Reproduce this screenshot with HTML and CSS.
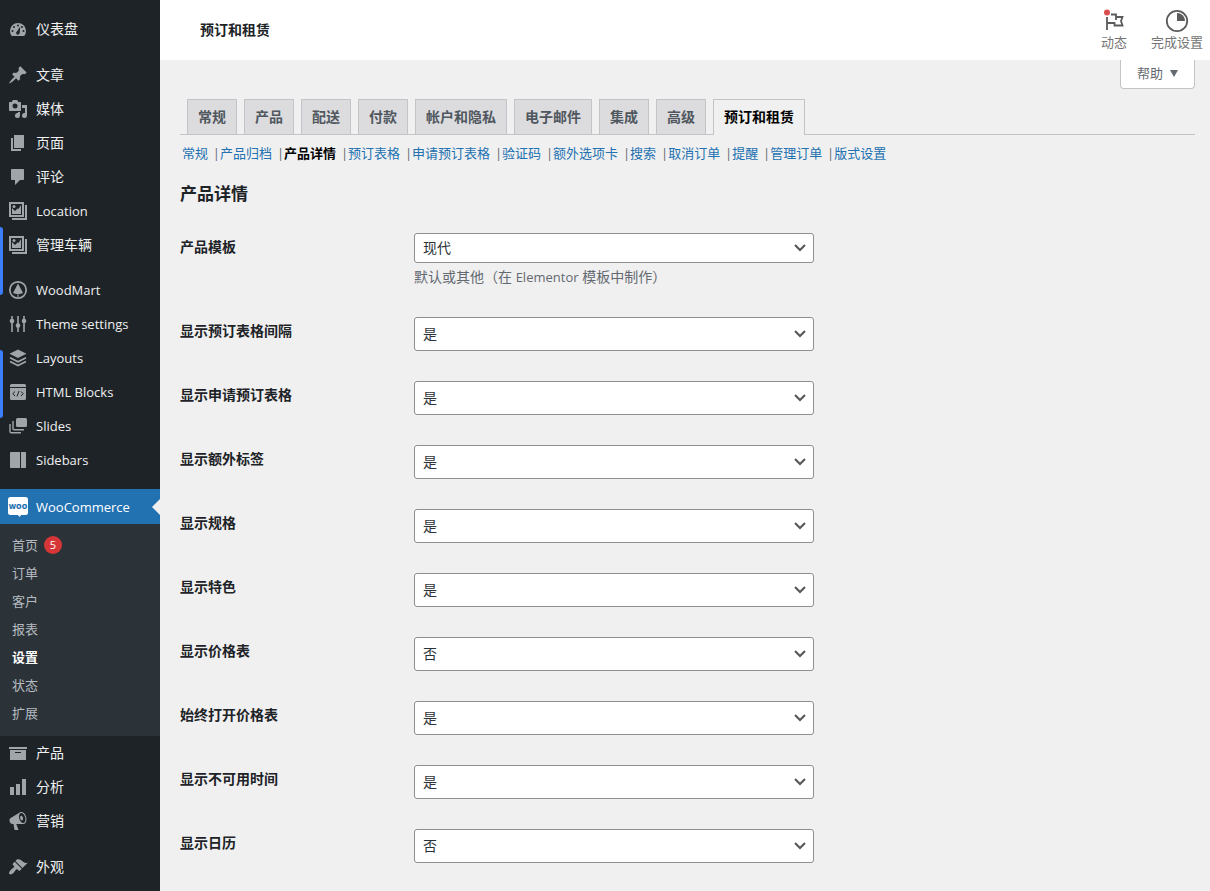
FILE: index.html
```html
<!DOCTYPE html>
<html lang="zh-CN">
<head>
<meta charset="utf-8">
<meta name="viewport" content="width=device-width, initial-scale=1">
<title>预订和租赁</title>
<link rel="stylesheet" href="styles.css">
</head>
<body>
<div class="app">
  <nav class="sidebar" aria-label="主菜单">
    <ul class="menu">
      <li><a class="menu-link" href="#"><svg class="icon" viewBox="0 0 20 20"><path d="M3.8 17h12.4A8 8 0 1 0 3.800 17z"/><g class="hole"><circle cx="10" cy="6.500" r="1"/><circle cx="6" cy="8" r="1"/><circle cx="14" cy="8" r="1"/><circle cx="4.500" cy="12" r="1"/><circle cx="15.500" cy="12" r="1"/><path d="M12.300 7.500l-.6 6a1.800 1.800 0 1 1-2.600-1.300z"/></g></svg>仪表盘</a></li>
      <li class="spaced"><a class="menu-link" href="#"><svg class="icon" viewBox="0 0 20 20"><path d="M10.440 3.020l1.820-1.820 6.360 6.350-1.830 1.820c-1.050-.68-2.480-.57-3.410.36l-.75.75c-.92.93-1.040 2.350-.35 3.410l-1.830 1.820-2.410-2.410-2.800 2.790c-.42.42-3.380 2.710-3.800 2.290s1.860-3.390 2.280-3.810l2.790-2.790L4.100 9.360l1.830-1.820c1.050.69 2.480.57 3.400-.36l.75-.75c.93-.92 1.050-2.350.36-3.410z"/></svg>文章</a></li>
      <li><a class="menu-link" href="#"><svg class="icon" viewBox="0 0 20 20"><path fill-rule="evenodd" d="M13 11V4c0-.55-.45-1-1-1h-1.670L9 1H5L3.670 3H2c-.55 0-1 .45-1 1v7c0 .55.45 1 1 1h10c.55 0 1-.45 1-1zM7 4.500a2.500 2.500 0 1 1 0 5 2.500 2.500 0 0 1 0-5z"/><path d="M14 6h5v10.500a2.500 2.500 0 1 1-2-2.450V9h-3zM10 14.050V13h2v3.500a2.500 2.500 0 1 1-2-2.450z"/></svg>媒体</a></li>
      <li><a class="menu-link" href="#"><svg class="icon" viewBox="0 0 20 20"><path d="M6 15V2h10v13H6zm-1 1h8v2H3V5h2v11z"/></svg>页面</a></li>
      <li><a class="menu-link" href="#"><svg class="icon" viewBox="0 0 20 20"><path d="M4 2h11c.6 0 1 .4 1 1v9c0 .6-.4 1-1 1h-3l-5 5v-5H4c-.6 0-1-.4-1-1V3c0-.6.4-1 1-1z"/></svg>评论</a></li>
      <li><a class="menu-link latin" href="#"><svg class="icon" viewBox="0 0 20 20"><path fill-rule="evenodd" d="M1 1h15v15H1zM3 3v11h11V3z"/><path d="M17 4h2v15H4v-2h13z"/><path d="M4 7l3 3 2.500-2.500 1 .5L13 4v9H4z"/><circle cx="6" cy="5.500" r="1.500"/></svg>Location</a></li>
      <li class="flagged"><a class="menu-link" href="#"><svg class="icon" viewBox="0 0 20 20"><path fill-rule="evenodd" d="M1 1h15v15H1zM3 3v11h11V3z"/><path d="M17 4h2v15H4v-2h13z"/><path d="M4 7l3 3 2.500-2.500 1 .5L13 4v9H4z"/><circle cx="6" cy="5.500" r="1.500"/></svg>管理车辆</a></li>
      <li class="spaced tight"><a class="menu-link latin" href="#"><svg class="icon" viewBox="0 0 20 20"><circle class="line" cx="10" cy="10" r="8.200"/><path d="M10 3.500l5 9.500c-1.300.7-2.800 1-4.500 1.100V17h-1v-2.900C7.800 14 6.300 13.700 5 13z"/></svg>WoodMart</a></li>
      <li><a class="menu-link latin" href="#"><svg class="icon" viewBox="0 0 20 20"><path d="M3.200 2h1.600v16H3.200zM9.200 2h1.600v16H9.200zM15.200 2h1.600v16h-1.600z"/><circle cx="4" cy="7" r="2.300"/><circle cx="10" cy="11.500" r="2.300"/><circle cx="16" cy="7" r="2.300"/></svg>Theme settings</a></li>
      <li><a class="menu-link latin" href="#"><svg class="icon" viewBox="0 0 20 20"><path d="M10 1.500l8.500 4.200L10 10 1.500 5.700z"/><path class="line" d="M2 9.700l8 4 8-4M2 13.500l8 4 8-4"/></svg>Layouts</a></li>
      <li class="flagged low"><a class="menu-link latin" href="#"><svg class="icon" viewBox="0 0 20 20"><path d="M3.500 2h13A1.500 1.500 0 0 1 18 3.500V5H2V3.500A1.500 1.500 0 0 1 3.500 2zM2 6h16v10.500a1.500 1.500 0 0 1-1.500 1.500h-13A1.500 1.500 0 0 1 2 16.500z"/><path class="cut" d="M7 9.500L4.800 11.700 7 14M13 9.500l2.200 2.200L13 14M11 9l-2 5.500"/></svg>HTML Blocks</a></li>
      <li><a class="menu-link latin" href="#"><svg class="icon" viewBox="0 0 20 20"><rect x="8" y="2" width="11" height="9" rx="1.500"/><path class="line thin" d="M5 5v7.500c0 .8.5 1.300 1.300 1.300H16M2 8v7.500c0 .8.500 1.300 1.300 1.300H13"/></svg>Slides</a></li>
      <li><a class="menu-link latin" href="#"><svg class="icon" viewBox="0 0 20 20"><path d="M3 2h9v16H3c-.6 0-1-.4-1-1V3c0-.6.4-1 1-1zM13 2h4c.6 0 1 .4 1 1v14c0 .6-.4 1-1 1h-4z"/></svg>Sidebars</a></li>
      <li class="spaced">
        <a class="menu-link latin current" href="#"><svg class="icon woo" viewBox="0 0 20 20"><path d="M2.500 0h15A2.500 2.500 0 0 1 20 2.500v13a2.500 2.500 0 0 1-2.500 2.500H13l-1.200 2-2-2H2.500A2.500 2.500 0 0 1 0 15.500v-13A2.500 2.500 0 0 1 2.500 0z"/><text class="woo-text" x="10" y="12" text-anchor="middle">WOO</text></svg>WooCommerce</a>
        <ul class="submenu">
          <li><a href="#">首页 <span class="count">5</span></a></li>
          <li><a href="#">订单</a></li>
          <li><a href="#">客户</a></li>
          <li><a href="#">报表</a></li>
          <li><a class="active" href="#">设置</a></li>
          <li><a href="#">状态</a></li>
          <li><a href="#">扩展</a></li>
        </ul>
      </li>
      <li><a class="menu-link" href="#"><svg class="icon" viewBox="0 0 20 20"><path d="M19 4v2H1V4h18zM2 7h16v10H2V7zm11 3V9H7v1h6z"/></svg>产品</a></li>
      <li><a class="menu-link" href="#"><svg class="icon" viewBox="0 0 20 20"><path d="M18 18V2h-4v16h4zm-6 0V7H8v11h4zm-6 0v-8H2v8h4z"/></svg>分析</a></li>
      <li><a class="menu-link" href="#"><svg class="icon" viewBox="0 0 20 20"><path d="M18.150 5.940c.46 1.620.38 3.220-.02 4.480-.42 1.280-1.260 2.180-2.300 2.480-.16.060-.26.060-.4.060-.06.020-.12.020-.18.020-.06.020-.14.020-.22.020h-6.800l2.220 5.500c.02.140-.06.260-.14.340-.08.100-.24.160-.34.160H6.950c-.1 0-.26-.06-.34-.16-.08-.08-.16-.2-.14-.34l-1-5.500H4.250l-.02-.02c-.5.060-1.080-.18-1.540-.62s-.88-1.080-1.060-1.880c-.24-.8-.2-1.560-.02-2.200.18-.62.58-1.080 1.060-1.300l.02-.02 9-5.400c.1-.06.18-.1.24-.16.060-.04.140-.08.24-.12.160-.08.280-.12.5-.18 1.040-.3 2.240.1 3.220.98s1.840 2.240 2.260 3.860zm-2.580 5.980h-.02c.4-.1.740-.34 1.040-.7.580-.7.860-1.760.86-3.040 0-.64-.1-1.300-.28-1.980-.34-1.360-1.020-2.500-1.780-3.240s-1.680-1.100-2.460-.88c-.82.220-1.400.96-1.700 2-.32 1.040-.28 2.360.06 3.720.38 1.360 1 2.500 1.800 3.240.78.740 1.620 1.100 2.480.88zm-2.540-7.080c.22-.04.42-.02.62.04.38.160.76.480 1.020 1s.42 1.200.42 1.780c0 .3-.04.56-.12.8-.18.48-.44.84-.86.940-.34.100-.8-.06-1.140-.4s-.64-.86-.78-1.500c-.18-.62-.12-1.240.02-1.720s.48-.84.82-.94z"/></svg>营销</a></li>
      <li class="spaced"><a class="menu-link" href="#"><svg class="icon" viewBox="0 0 20 20"><path d="M14.480 11.060L7.410 3.990l1.500-1.500c.5-.56 2.300-.47 3.510.32 1.210.8 1.430 1.280 2.910 2.100 1.180.64 2.450 1.260 4.450.85zm-.71.71L6.700 4.700 4.930 6.470c-.39.39-.39 1.020 0 1.410l1.060 1.060c.39.39.39 1.030 0 1.420-.6.6-1.430 1.110-2.210 1.690-.35.26-.7.53-1.010.84C1.430 14.230.4 16.080 1.400 17.070c.99 1 2.840-.03 4.180-1.360.31-.31.58-.66.85-1.020.57-.78 1.080-1.610 1.690-2.210.39-.39 1.020-.39 1.410 0l1.060 1.060c.39.39 1.020.39 1.410 0z"/></svg>外观</a></li>
    </ul>
  </nav>

  <div class="main">
    <header class="topbar">
      <h1 class="page-title">预订和租赁</h1>
      <div class="actions">
        <button class="action" type="button">
          <svg class="action-icon" viewBox="0 0 24 24"><path class="stroke" d="M5 8v13M9 5.500h5v2.500h6.500l-1.500 4 1.500 4.500h-8v-2.500H5M14 8v3"/><circle class="dot" cx="5" cy="3.500" r="3"/></svg>
          动态
        </button>
        <button class="action" type="button">
          <svg class="action-icon" viewBox="0 0 24 24"><circle class="stroke" cx="12" cy="12" r="10.200"/><path class="solid" d="M12 4a8 8 0 0 1 8 8h-8z"/></svg>
          完成设置
        </button>
      </div>
    </header>

    <main class="content">
      <div class="help-row"><button class="help" type="button">帮助 <svg class="caret" viewBox="0 0 8 8"><path d="M0 1h8L4 8z"/></svg></button></div>

      <nav class="tabs" aria-label="设置">
        <a class="tab" href="#">常规</a>
        <a class="tab" href="#">产品</a>
        <a class="tab" href="#">配送</a>
        <a class="tab" href="#">付款</a>
        <a class="tab" href="#">帐户和隐私</a>
        <a class="tab" href="#">电子邮件</a>
        <a class="tab" href="#">集成</a>
        <a class="tab" href="#">高级</a>
        <a class="tab selected" href="#">预订和租赁</a>
      </nav>

      <ul class="sections">
        <li><a href="#">常规</a><span class="bar">|</span></li>
        <li><a href="#">产品归档</a><span class="bar">|</span></li>
        <li><a class="active" href="#">产品详情</a><span class="bar">|</span></li>
        <li><a href="#">预订表格</a><span class="bar">|</span></li>
        <li><a href="#">申请预订表格</a><span class="bar">|</span></li>
        <li><a href="#">验证码</a><span class="bar">|</span></li>
        <li><a href="#">额外选项卡</a><span class="bar">|</span></li>
        <li><a href="#">搜索</a><span class="bar">|</span></li>
        <li><a href="#">取消订单</a><span class="bar">|</span></li>
        <li><a href="#">提醒</a><span class="bar">|</span></li>
        <li><a href="#">管理订单</a><span class="bar">|</span></li>
        <li><a href="#">版式设置</a></li>
      </ul>

      <h2 class="section-title">产品详情</h2>

      <form class="form">
        <div class="row"><label for="f1">产品模板</label><div class="field"><select class="short" id="f1"><option>现代</option><option>默认</option></select><p class="hint">默认或其他（在 <span class="latin">Elementor</span> 模板中制作）</p></div></div>
        <div class="row"><label for="f2">显示预订表格间隔</label><select id="f2"><option>是</option><option>否</option></select></div>
        <div class="row"><label for="f3">显示申请预订表格</label><select id="f3"><option>是</option><option>否</option></select></div>
        <div class="row"><label for="f4">显示额外标签</label><select id="f4"><option>是</option><option>否</option></select></div>
        <div class="row"><label for="f5">显示规格</label><select id="f5"><option>是</option><option>否</option></select></div>
        <div class="row"><label for="f6">显示特色</label><select id="f6"><option>是</option><option>否</option></select></div>
        <div class="row"><label for="f7">显示价格表</label><select id="f7"><option>否</option><option>是</option></select></div>
        <div class="row"><label for="f8">始终打开价格表</label><select id="f8"><option>是</option><option>否</option></select></div>
        <div class="row"><label for="f9">显示不可用时间</label><select id="f9"><option>是</option><option>否</option></select></div>
        <div class="row"><label for="f10">显示日历</label><select id="f10"><option>否</option><option>是</option></select></div>
      </form>
    </main>
  </div>
</div>
</body>
</html>
```
FILE: styles.css
```css
* {
  box-sizing: border-box;
}

body {
  margin: 0;
  background: #f0f0f0;
  color: #1d2327;
  font: 13px/20px "Open Sans", "Noto Sans CJK SC", sans-serif;
}

ul {
  list-style: none;
  margin: 0;
  padding: 0;
}

a {
  text-decoration: none;
}

button,
select {
  font-family: inherit;
}

.app {
  display: flex;
  min-height: 100vh;
}

/* Sidebar */
.sidebar {
  flex: none;
  width: 160px;
  background: #1d2327;
}

.menu {
  padding: 12px 0 7px;
}

.menu > li {
  position: relative;
}

.spaced {
  margin-top: 12px;
}

.spaced.tight {
  margin-top: 11px;
}

.menu-link {
  position: relative;
  display: flex;
  align-items: center;
  gap: 8px;
  height: 34px;
  padding-left: 8px;
  color: #f0f0f1;
  font-size: 14px;
}

.latin {
  font-size: 13px;
}

.icon {
  flex: none;
  width: 20px;
  height: 20px;
  fill: #a0a5aa;
}

.icon .hole {
  fill: #1d2327;
}

.icon .line {
  fill: none;
  stroke: #a0a5aa;
  stroke-width: 1.7;
}

.icon .thin {
  stroke-width: 1.4;
}

.icon .cut {
  fill: none;
  stroke: #1d2327;
  stroke-width: 1;
}

.icon.woo {
  fill: #fff;
}

.woo-text {
  fill: #2271b1;
  font: 800 7px "Open Sans", sans-serif;
}

.flagged::before {
  content: "";
  position: absolute;
  left: 0;
  top: -1px;
  width: 3px;
  height: 68px;
  border-radius: 0 4px 4px 0;
  background: #3d7eff;
}

.flagged.low::before {
  top: -25px;
}

.current {
  height: 35px;
  background: #2271b1;
  color: #fff;
}

.current::after {
  content: "";
  position: absolute;
  right: 0;
  top: 10px;
  border: 8px solid transparent;
  border-left: 0;
  border-right-color: #f0f0f0;
}

.submenu {
  padding: 7px 0 9px;
  background: #2c3338;
}

.submenu a {
  display: flex;
  align-items: center;
  gap: 6px;
  height: 28px;
  padding-left: 12px;
  color: #b5bbc1;
}

.submenu .active {
  color: #fff;
  font-weight: 700;
}

.count {
  width: 18px;
  height: 18px;
  border-radius: 50%;
  background: #d63638;
  color: #fff;
  font-size: 11px;
  line-height: 18px;
  text-align: center;
}

/* Header */
.main {
  flex: 1;
  min-width: 0;
}

.topbar {
  display: flex;
  align-items: center;
  justify-content: space-between;
  height: 60px;
  padding: 0 7px 0 40px;
  background: #fff;
}

.page-title {
  margin: 0;
  font-size: 14px;
  font-weight: 600;
}

.actions {
  display: flex;
  gap: 24px;
}

.action {
  display: flex;
  flex-direction: column;
  align-items: center;
  padding: 0;
  border: 0;
  background: none;
  color: #757575;
  font-size: 13px;
  line-height: 18px;
}

.action-icon {
  width: 24px;
  height: 24px;
}

.action-icon .stroke {
  fill: none;
  stroke: #5b5b5b;
  stroke-width: 1.8;
}

.action-icon .dot {
  fill: #d94f4f;
}

.action-icon .solid {
  fill: #5b5b5b;
}

/* Content */
.content {
  padding: 0 15px 14px 20px;
}

.help-row {
  display: flex;
  justify-content: flex-end;
}

.help {
  display: flex;
  align-items: center;
  gap: 7px;
  height: 29px;
  padding: 0 16px 3px;
  border: 1px solid #c3c4c7;
  border-top: 0;
  border-radius: 0 0 4px 4px;
  background: #fff;
  color: #646970;
  font-size: 13px;
}

.caret {
  width: 8px;
  height: 8px;
  fill: #646970;
}

.tabs {
  display: flex;
  gap: 7px;
  margin-top: 10px;
  padding-left: 7px;
  border-bottom: 1px solid #c3c4c7;
}

.tab {
  height: 35px;
  padding: 5px 10px;
  border: 1px solid #c3c4c7;
  border-bottom: 0;
  background: #dcdcde;
  color: #50575e;
  font-size: 14px;
  font-weight: 600;
  line-height: 24px;
}

.tab.selected {
  height: 36px;
  margin-bottom: -1px;
  background: #f0f0f0;
  color: #000;
}

.sections {
  display: flex;
  flex-wrap: wrap;
  margin-top: 8px;
  padding-left: 2px;
}

.sections a {
  color: #2271b1;
}

.sections .active {
  color: #000;
  font-weight: 600;
}

.bar {
  display: inline-block;
  width: 12px;
  color: #646970;
  text-align: right;
}

.section-title {
  margin: 19px 0 12px;
  font-size: 17px;
  font-weight: 600;
  line-height: 24px;
}

.row {
  display: grid;
  grid-template-columns: 234px minmax(0, 400px);
  align-items: start;
  padding: 15px 0;
}

.row label {
  font-size: 14px;
  font-weight: 600;
  line-height: 28px;
}

select {
  width: 100%;
  height: 34px;
  padding: 0 24px 2px 8px;
  border: 1px solid #8c8f94;
  border-radius: 3px;
  appearance: none;
  background: #fff url("data:image/svg+xml,%3Csvg xmlns='http://www.w3.org/2000/svg' viewBox='0 0 20 20'%3E%3Cpath d='M5 7l5 5 5-5' fill='none' stroke='%23555' stroke-width='2'/%3E%3C/svg%3E") no-repeat right 3px center / 20px 20px;
  color: #2c3338;
  font-size: 14px;
}

select.short {
  display: block;
  height: 30px;
}

.hint {
  margin: 4px 0 0;
  color: #646970;
  font-size: 14px;
  line-height: 20px;
}

.hint .latin {
  font-size: 13px;
}
```
